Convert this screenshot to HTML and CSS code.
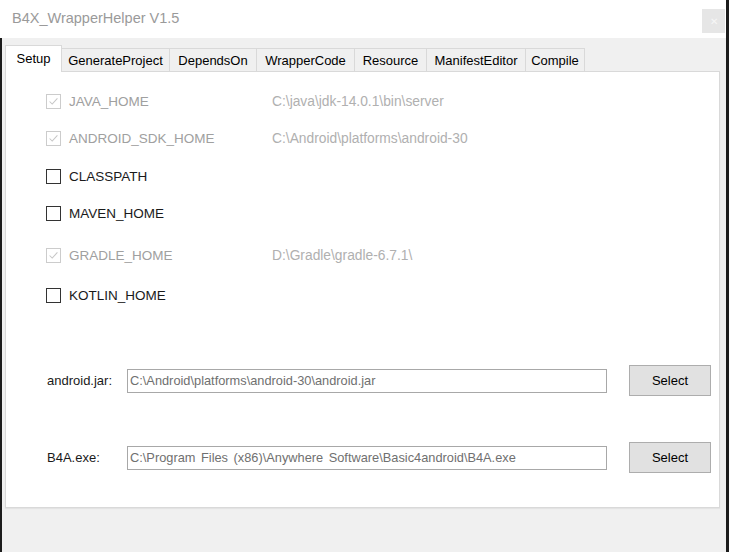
FILE: index.html
```html
<!DOCTYPE html>
<html lang="en">
<head>
<meta charset="utf-8">
<title>B4X_WrapperHelper V1.5</title>
<link rel="stylesheet" href="styles.css">
</head>
<body>
<div class="window">
  <header class="titlebar">
    <span class="title">B4X_WrapperHelper V1.5</span>
    <span class="close">&#x2715;</span>
  </header>
  <div class="client">
    <nav class="tabs">
      <div class="tab active tab-setup">Setup</div>
      <div class="tab tab-generate">GenerateProject</div>
      <div class="tab tab-depends">DependsOn</div>
      <div class="tab tab-wrapper">WrapperCode</div>
      <div class="tab tab-resource">Resource</div>
      <div class="tab tab-manifest">ManifestEditor</div>
      <div class="tab tab-compile">Compile</div>
    </nav>
    <section class="panel">
      <ul class="env-list">
        <li class="env disabled">
          <span class="cb checked"><svg viewBox="0 0 15 15"><path d="M3 7.5 L6 10.5 L12 4"/></svg></span>
          <span class="env-name">JAVA_HOME</span>
          <span class="env-path">C:\java\jdk-14.0.1\bin\server</span>
        </li>
        <li class="env disabled">
          <span class="cb checked"><svg viewBox="0 0 15 15"><path d="M3 7.5 L6 10.5 L12 4"/></svg></span>
          <span class="env-name">ANDROID_SDK_HOME</span>
          <span class="env-path">C:\Android\platforms\android-30</span>
        </li>
        <li class="env env-gap-s">
          <span class="cb"></span>
          <span class="env-name">CLASSPATH</span>
        </li>
        <li class="env">
          <span class="cb"></span>
          <span class="env-name">MAVEN_HOME</span>
        </li>
        <li class="env disabled env-gap-l">
          <span class="cb checked"><svg viewBox="0 0 15 15"><path d="M3 7.5 L6 10.5 L12 4"/></svg></span>
          <span class="env-name">GRADLE_HOME</span>
          <span class="env-path">D:\Gradle\gradle-6.7.1\</span>
        </li>
        <li class="env env-gap-m">
          <span class="cb"></span>
          <span class="env-name">KOTLIN_HOME</span>
        </li>
      </ul>
      <div class="file-row file-row-first">
        <label class="file-label">android.jar:</label>
        <div class="textbox">C:\Android\platforms\android-30\android.jar</div>
        <button class="btn">Select</button>
      </div>
      <div class="file-row">
        <label class="file-label">B4A.exe:</label>
        <div class="textbox">C:\Program Files (x86)\Anywhere Software\Basic4android\B4A.exe</div>
        <button class="btn">Select</button>
      </div>
    </section>
  </div>
</div>
</body>
</html>
```
FILE: styles.css
```css
* { box-sizing: border-box; }

body {
  margin: 0;
  font-family: "Liberation Sans", Arial, sans-serif;
  background: #f0f0f0;
}

.window {
  width: 729px;
  height: 552px;
  display: flex;
  flex-direction: column;
  background: #f0f0f0;
  border-right: 3px solid #1c1c1c;
}

/* title bar */
.titlebar {
  height: 38px;
  flex: none;
  display: flex;
  align-items: flex-start;
  background: #ffffff;
  padding: 0 1px 0 12px;
}

.title {
  margin-top: 9px;
  font-size: 14.5px;
  color: #9a9a9a;
  line-height: 18px;
}

.close {
  margin-left: auto;
  margin-top: 9px;
  width: 23px;
  height: 24px;
  background: #e6e6e6;
  color: #f6f6f6;
  font-size: 10px;
  display: flex;
  align-items: center;
  justify-content: center;
}

/* client area */
.client {
  flex: 1;
  display: flex;
  flex-direction: column;
  border-left: 2px solid #1c1c1c;
}

.tabs {
  height: 33px;
  flex: none;
  display: flex;
  align-items: flex-end;
  padding-left: 3px;
}

.tab {
  height: 23px;
  margin-left: -1px;
  border: 1px solid #d9d9d9;
  border-bottom: none;
  background: #f0f0f0;
  font-size: 13px;
  color: #000;
  display: flex;
  align-items: center;
  justify-content: center;
  padding-top: 1px;
}

.tab.active {
  height: 27px;
  margin-left: 0;
  margin-bottom: -1px;
  background: #ffffff;
  position: relative;
  z-index: 1;
  padding-top: 0;
  padding-bottom: 2px;
}

.tab-setup { width: 57px; }
.tab-generate { width: 109px; }
.tab-depends { width: 88px; }
.tab-wrapper { width: 99px; }
.tab-resource { width: 73px; }
.tab-manifest { width: 100px; }
.tab-compile { width: 60px; }

.panel {
  height: 437px;
  margin: 0 6px 0 3px;
  background: #ffffff;
  border: 1px solid #d9d9d9;
  box-shadow: 0 1px 1px rgba(0, 0, 0, 0.05);
  padding: 18px 0 0 40px;
}

/* environment variables */
.env-list {
  list-style: none;
  margin: 0;
  padding: 0;
  display: flex;
  flex-direction: column;
  gap: 15px;
}

.env {
  height: 22px;
  display: grid;
  grid-template-columns: 15px 195px auto;
  column-gap: 8px;
  align-items: center;
}

.env-gap-s { margin-top: 1px; }
.env-gap-m { margin-top: 3px; }
.env-gap-l { margin-top: 5px; }

.cb {
  width: 15px;
  height: 15px;
  border: 1px solid #333333;
  background: #ffffff;
  display: block;
}

.cb svg {
  display: block;
  width: 13px;
  height: 13px;
}

.cb svg path {
  fill: none;
  stroke: #c6c6c6;
  stroke-width: 1.2;
}

.env.disabled .cb { border-color: #cccccc; }

.env-name {
  font-size: 13.5px;
  color: #1a1a1a;
}

.env.disabled .env-name { color: #a0a0a0; }

.env-path {
  font-size: 13.8px;
  color: #b0b0b0;
}

/* file pickers */
.file-row {
  height: 31px;
  margin-top: 46px;
  display: grid;
  grid-template-columns: 81px 480px 82px;
  column-gap: 0;
  align-items: center;
}

.file-row-first { margin-top: 59px; }

.file-label {
  font-size: 13px;
  color: #1a1a1a;
  padding-left: 1px;
}

.textbox {
  height: 24px;
  border: 1px solid #a8a8a8;
  background: #ffffff;
  font-size: 12.8px;
  word-spacing: 2px;
  color: #707070;
  padding-left: 2px;
  line-height: 22px;
  white-space: nowrap;
  overflow: hidden;
}

.btn {
  grid-column: 3;
  margin-left: 22px;
  width: 82px;
  height: 31px;
  border: 1px solid #adadad;
  background: #e1e1e1;
  font-family: "Liberation Sans", Arial, sans-serif;
  font-size: 13px;
  color: #000;
  padding: 0;
}
```
